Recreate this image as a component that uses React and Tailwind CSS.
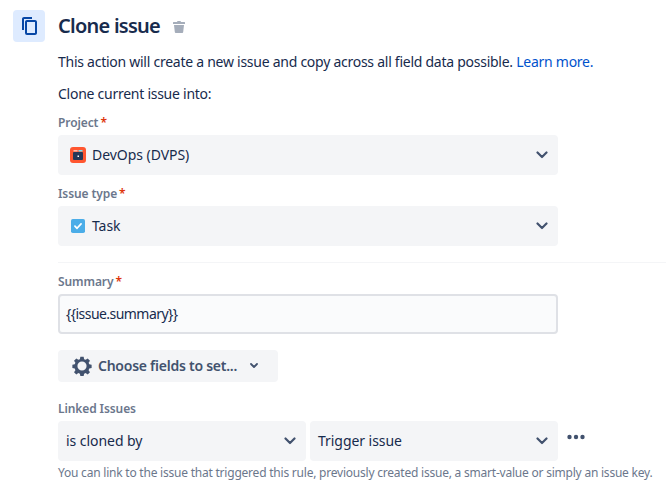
const font = { fontFamily: '"Noto Sans", sans-serif' }

const Chevron = () => (
  <svg viewBox="0 0 12 8" className="w-3 h-2 text-[#42526e]" fill="none" stroke="currentColor" strokeWidth="2.2" strokeLinecap="round" strokeLinejoin="round">
    <path d="M1.5 1.5L6 6l4.5-4.5" />
  </svg>
)

const Label = ({ children, required }) => (
  <div className="text-xs font-semibold leading-4 text-[#6b778c] tracking-[-0.1px]">
    {children}
    {required && <span className="text-[#de350b] ml-0.5">*</span>}
  </div>
)

const Select = ({ children, className = '' }) => (
  <div className={`h-10 bg-[#f4f5f7] rounded flex items-center justify-between pl-2 pr-2.5 text-sm tracking-[-0.05px] text-[#172b4d] ${className}`}>
    <div className="flex items-center">{children}</div>
    <Chevron />
  </div>
)

const App = () => {
  return (
    <div className="w-[666px] h-[496px] overflow-hidden bg-white pl-[13px] pt-2.5 text-[#172b4d]" style={font}>
      <div className="flex items-center h-8">
        <div className="w-8 h-8 bg-[#deebff] rounded flex items-center justify-center">
          <svg viewBox="0 0 24 24" className="w-6 h-6" fill="#0747a6">
            <path d="M10 19h8V8h-8v11zM8 7.992C8 6.892 8.902 6 10.009 6h7.982C19.101 6 20 6.893 20 7.992v11.016c0 1.1-.902 1.992-2.009 1.992H10.01A2.001 2.001 0 018 19.008V7.992z" />
            <path d="M5 16V4.992C5 3.892 5.902 3 7.009 3H15v13H5zm2 0h8V5H7v11z" />
          </svg>
        </div>
        <h1 className="ml-[13px] text-xl font-semibold leading-6 tracking-[-0.75px]">Clone issue</h1>
        <svg viewBox="0 0 12 12" className="w-3 h-3 ml-[13px] mt-0.5" fill="#a5adba">
          <path d="M4.500 0h3l.5 1h3.500a.5.5 0 01.5.5V3H0V1.500a.5.5 0 01.5-.5H4zM1 4h10l-.8 7a1 1 0 01-1 1H2.800a1 1 0 01-1-1z" />
        </svg>
      </div>

      <div className="ml-[45px] w-[608px]">
        <p className="mt-2.5 text-sm leading-5 tracking-[-0.26px]">
          This action will create a new issue and copy across all field data possible.{' '}
          <a className="text-[#0052cc]">Learn more.</a>
        </p>
        <p className="mt-3 text-sm leading-5 tracking-[-0.26px]">Clone current issue into:</p>

        <div className="mt-[11px]">
          <Label required>Project</Label>
        </div>
        <Select className="mt-1 w-[500px]">
          <svg viewBox="0 0 16 16" className="w-4 h-4 ml-1 mr-1.5">
            <rect width="16" height="16" rx="3" fill="#ff5630" />
            <rect x="3" y="5" width="10" height="8" rx="1" fill="#253858" />
            <rect x="3.500" y="3" width="4" height="1.500" fill="#ffbdad" />
            <rect x="8.500" y="3" width="4" height="1.500" fill="#79e2f2" />
            <rect x="7.500" y="8.500" width="1.500" height="1.500" fill="#fff" />
          </svg>
          DevOps (DVPS)
        </Select>

        <div className="mt-[11px]">
          <Label required>Issue type</Label>
        </div>
        <Select className="mt-1 w-[500px]">
          <svg viewBox="0 0 16 16" className="w-[14px] h-[14px] ml-[5px] mr-[7px]">
            <rect width="16" height="16" rx="2" fill="#4bade8" />
            <path d="M4.500 8.200l2.400 2.400 4.600-5" fill="none" stroke="#fff" strokeWidth="2" strokeLinecap="round" strokeLinejoin="round" />
          </svg>
          Task
        </Select>

        <div className="mt-4 border-t border-[#f4f5f7]" />

        <div className="mt-[11px]">
          <Label required>Summary</Label>
        </div>
        <div className="mt-1 w-[500px] h-10 border-2 border-[#dfe1e6] rounded bg-[#fafbfc] flex items-center px-1.5 text-sm tracking-[-0.55px]">
          {'{{issue.summary}}'}
        </div>

        <button className="mt-4 w-[220px] h-8 bg-[#f4f5f7] rounded flex items-center pl-[13px] text-sm font-semibold text-[#42526e] tracking-[-0.25px]">
          <svg viewBox="0 0 24 24" className="w-[22px] h-[22px] mr-[5px]" fill="#42526e">
            <path fillRule="evenodd" d="M10.200 2h3.600l.5 2.600 1.700.7 2.200-1.500 2.500 2.500-1.500 2.200.7 1.700 2.600.5v3.600l-2.600.5-.7 1.700 1.500 2.200-2.500 2.500-2.200-1.500-1.700.7-.5 2.600h-3.600l-.5-2.600-1.700-.7-2.200 1.500-2.500-2.500 1.500-2.200-.7-1.700-2.600-.5v-3.600l2.600-.5.7-1.700-1.500-2.200 2.500-2.500 2.200 1.500 1.700-.7.5-2.600zM12 7a5 5 0 100 10 5 5 0 000-10z" />
          </svg>
          Choose fields to set...
          <svg viewBox="0 0 8 6" className="w-2 h-1.5 ml-[13px]" fill="none" stroke="#42526e" strokeWidth="1.800" strokeLinecap="round" strokeLinejoin="round">
            <path d="M1 1l3 3 3-3" />
          </svg>
        </button>

        <div className="mt-[19px]">
          <Label>Linked Issues</Label>
        </div>
        <div className="mt-1 flex items-start">
          <Select className="w-[248px]">is cloned by</Select>
          <Select className="w-[248px] ml-1">Trigger issue</Select>
          <svg viewBox="0 0 18 6" className="w-[18px] h-1.5 ml-[9px] mt-[13px]" fill="#42526e">
            <circle cx="2.500" cy="3" r="2.200" />
            <circle cx="9" cy="3" r="2.200" />
            <circle cx="15.500" cy="3" r="2.200" />
          </svg>
        </div>
        <p className="mt-1 text-xs leading-4 text-[#6b778c] whitespace-nowrap tracking-[-0.22px]">
          You can link to the issue that triggered this rule, previously created issue, a smart-value or simply an issue key.
        </p>
      </div>
    </div>
  )
}

export default App
